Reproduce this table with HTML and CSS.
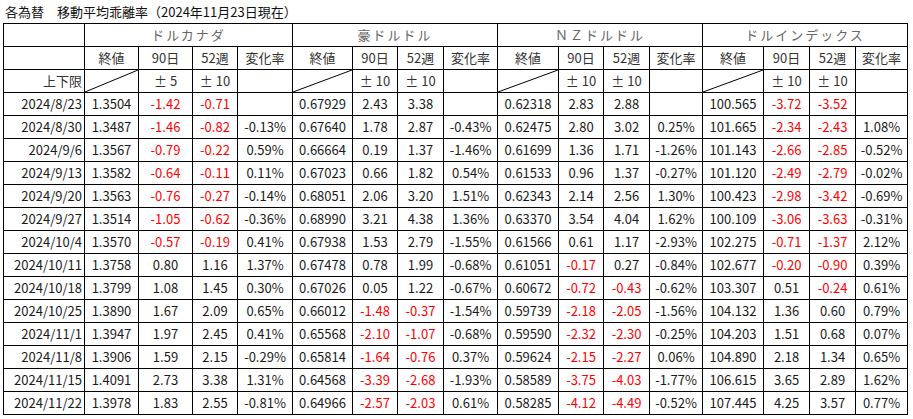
FILE: index.html
```html
<!DOCTYPE html>
<html lang="ja">
<head>
<meta charset="utf-8">
<title>各為替　移動平均乖離率</title>
<link rel="stylesheet" href="styles.css">
</head>
<body>
<div class="title">各為替　移動平均乖離率（2024年11月23日現在）</div>
<table class="grid">
<colgroup>
<col class="c-date">
<col class="w54"><col class="w54"><col class="w45"><col class="w55">
<col class="w60"><col class="w45"><col class="w46"><col class="w54">
<col class="w61"><col class="w45"><col class="w46"><col class="w53">
<col class="w61"><col class="w46"><col class="w46"><col class="w52">
</colgroup>
<thead>
<tr><th></th><th colspan="4" class="cur">ドルカナダ</th><th colspan="4" class="cur">豪ドルドル</th><th colspan="4" class="cur">ＮＺドルドル</th><th colspan="4" class="cur">ドルインデックス</th></tr>
<tr><th></th><th>終値</th><th>90日</th><th>52週</th><th>変化率</th><th>終値</th><th>90日</th><th>52週</th><th>変化率</th><th>終値</th><th>90日</th><th>52週</th><th>変化率</th><th>終値</th><th>90日</th><th>52週</th><th>変化率</th></tr>
<tr><th class="d">上下限</th>
<th class="diag"><svg class="slash" viewBox="0 0 100 100" preserveAspectRatio="none"><line x1="0" y1="100" x2="100" y2="0" vector-effect="non-scaling-stroke"/></svg></th><th><span class="pm">±</span>5</th><th><span class="pm">±</span>10</th><th></th>
<th class="diag"><svg class="slash" viewBox="0 0 100 100" preserveAspectRatio="none"><line x1="0" y1="100" x2="100" y2="0" vector-effect="non-scaling-stroke"/></svg></th><th><span class="pm">±</span>10</th><th><span class="pm">±</span>10</th><th></th>
<th class="diag"><svg class="slash" viewBox="0 0 100 100" preserveAspectRatio="none"><line x1="0" y1="100" x2="100" y2="0" vector-effect="non-scaling-stroke"/></svg></th><th><span class="pm">±</span>10</th><th><span class="pm">±</span>10</th><th></th>
<th class="diag"><svg class="slash" viewBox="0 0 100 100" preserveAspectRatio="none"><line x1="0" y1="100" x2="100" y2="0" vector-effect="non-scaling-stroke"/></svg></th><th><span class="pm">±</span>10</th><th><span class="pm">±</span>10</th><th></th></tr>
</thead>
<tbody>
<tr><td class="d">2024/8/23</td><td>1.3504</td><td class="n">-1.42</td><td class="n">-0.71</td><td></td><td>0.67929</td><td>2.43</td><td>3.38</td><td></td><td>0.62318</td><td>2.83</td><td>2.88</td><td></td><td>100.565</td><td class="n">-3.72</td><td class="n">-3.52</td><td></td></tr>
<tr><td class="d">2024/8/30</td><td>1.3487</td><td class="n">-1.46</td><td class="n">-0.82</td><td>-0.13%</td><td>0.67640</td><td>1.78</td><td>2.87</td><td>-0.43%</td><td>0.62475</td><td>2.80</td><td>3.02</td><td>0.25%</td><td>101.665</td><td class="n">-2.34</td><td class="n">-2.43</td><td>1.08%</td></tr>
<tr><td class="d">2024/9/6</td><td>1.3567</td><td class="n">-0.79</td><td class="n">-0.22</td><td>0.59%</td><td>0.66664</td><td>0.19</td><td>1.37</td><td>-1.46%</td><td>0.61699</td><td>1.36</td><td>1.71</td><td>-1.26%</td><td>101.143</td><td class="n">-2.66</td><td class="n">-2.85</td><td>-0.52%</td></tr>
<tr><td class="d">2024/9/13</td><td>1.3582</td><td class="n">-0.64</td><td class="n">-0.11</td><td>0.11%</td><td>0.67023</td><td>0.66</td><td>1.82</td><td>0.54%</td><td>0.61533</td><td>0.96</td><td>1.37</td><td>-0.27%</td><td>101.120</td><td class="n">-2.49</td><td class="n">-2.79</td><td>-0.02%</td></tr>
<tr><td class="d">2024/9/20</td><td>1.3563</td><td class="n">-0.76</td><td class="n">-0.27</td><td>-0.14%</td><td>0.68051</td><td>2.06</td><td>3.20</td><td>1.51%</td><td>0.62343</td><td>2.14</td><td>2.56</td><td>1.30%</td><td>100.423</td><td class="n">-2.98</td><td class="n">-3.42</td><td>-0.69%</td></tr>
<tr><td class="d">2024/9/27</td><td>1.3514</td><td class="n">-1.05</td><td class="n">-0.62</td><td>-0.36%</td><td>0.68990</td><td>3.21</td><td>4.38</td><td>1.36%</td><td>0.63370</td><td>3.54</td><td>4.04</td><td>1.62%</td><td>100.109</td><td class="n">-3.06</td><td class="n">-3.63</td><td>-0.31%</td></tr>
<tr><td class="d">2024/10/4</td><td>1.3570</td><td class="n">-0.57</td><td class="n">-0.19</td><td>0.41%</td><td>0.67938</td><td>1.53</td><td>2.79</td><td>-1.55%</td><td>0.61566</td><td>0.61</td><td>1.17</td><td>-2.93%</td><td>102.275</td><td class="n">-0.71</td><td class="n">-1.37</td><td>2.12%</td></tr>
<tr><td class="d">2024/10/11</td><td>1.3758</td><td>0.80</td><td>1.16</td><td>1.37%</td><td>0.67478</td><td>0.78</td><td>1.99</td><td>-0.68%</td><td>0.61051</td><td class="n">-0.17</td><td>0.27</td><td>-0.84%</td><td>102.677</td><td class="n">-0.20</td><td class="n">-0.90</td><td>0.39%</td></tr>
<tr><td class="d">2024/10/18</td><td>1.3799</td><td>1.08</td><td>1.45</td><td>0.30%</td><td>0.67026</td><td>0.05</td><td>1.22</td><td>-0.67%</td><td>0.60672</td><td class="n">-0.72</td><td class="n">-0.43</td><td>-0.62%</td><td>103.307</td><td>0.51</td><td class="n">-0.24</td><td>0.61%</td></tr>
<tr><td class="d">2024/10/25</td><td>1.3890</td><td>1.67</td><td>2.09</td><td>0.65%</td><td>0.66012</td><td class="n">-1.48</td><td class="n">-0.37</td><td>-1.54%</td><td>0.59739</td><td class="n">-2.18</td><td class="n">-2.05</td><td>-1.56%</td><td>104.132</td><td>1.36</td><td>0.60</td><td>0.79%</td></tr>
<tr><td class="d">2024/11/1</td><td>1.3947</td><td>1.97</td><td>2.45</td><td>0.41%</td><td>0.65568</td><td class="n">-2.10</td><td class="n">-1.07</td><td>-0.68%</td><td>0.59590</td><td class="n">-2.32</td><td class="n">-2.30</td><td>-0.25%</td><td>104.203</td><td>1.51</td><td>0.68</td><td>0.07%</td></tr>
<tr><td class="d">2024/11/8</td><td>1.3906</td><td>1.59</td><td>2.15</td><td>-0.29%</td><td>0.65814</td><td class="n">-1.64</td><td class="n">-0.76</td><td>0.37%</td><td>0.59624</td><td class="n">-2.15</td><td class="n">-2.27</td><td>0.06%</td><td>104.890</td><td>2.18</td><td>1.34</td><td>0.65%</td></tr>
<tr><td class="d">2024/11/15</td><td>1.4091</td><td>2.73</td><td>3.38</td><td>1.31%</td><td>0.64568</td><td class="n">-3.39</td><td class="n">-2.68</td><td>-1.93%</td><td>0.58589</td><td class="n">-3.75</td><td class="n">-4.03</td><td>-1.77%</td><td>106.615</td><td>3.65</td><td>2.89</td><td>1.62%</td></tr>
<tr><td class="d">2024/11/22</td><td>1.3978</td><td>1.83</td><td>2.55</td><td>-0.81%</td><td>0.64966</td><td class="n">-2.57</td><td class="n">-2.03</td><td>0.61%</td><td>0.58285</td><td class="n">-4.12</td><td class="n">-4.49</td><td>-0.52%</td><td>107.445</td><td>4.25</td><td>3.57</td><td>0.77%</td></tr>
</tbody>
</table>
</body>
</html>
```
FILE: styles.css
```css
html, body {
  margin: 0;
  padding: 0;
  background: #ffffff;
}
body {
  font-family: "Noto Sans CJK JP", "Noto Sans", sans-serif;
  font-size: 13px;
  color: #1a1a1a;
}
.title {
  height: 23px;
  line-height: 23px;
  padding-left: 5px;
  font-size: 13px;
  color: #111;
}
.grid {
  margin-left: 3px;
  border-collapse: collapse;
  table-layout: fixed;
  width: 905px;
}
.c-date { width: 81px; }
.w45 { width: 45px; }
.w46 { width: 46px; }
.w52 { width: 52px; }
.w53 { width: 53px; }
.w54 { width: 54px; }
.w55 { width: 55px; }
.w60 { width: 60px; }
.w61 { width: 61px; }
.grid th,
.grid td {
  border: 1px solid #000;
  height: 22px;
  padding: 0;
  text-align: center;
  vertical-align: middle;
  font-weight: normal;
  white-space: nowrap;
  line-height: 20px;
}
.grid th {
  color: #333;
}
.grid th.cur {
  color: #666;
  letter-spacing: 2px;
}
.grid .d {
  text-align: right;
  padding-right: 2px;
}
.grid .n {
  color: #ff0000;
}
.pm {
  display: inline-block;
  margin-right: 3px;
}
.grid th.diag {
  line-height: 0;
}
.slash {
  display: block;
  width: 100%;
  height: 22px;
}
.slash line {
  stroke: #000;
  stroke-width: 1;
}
```
